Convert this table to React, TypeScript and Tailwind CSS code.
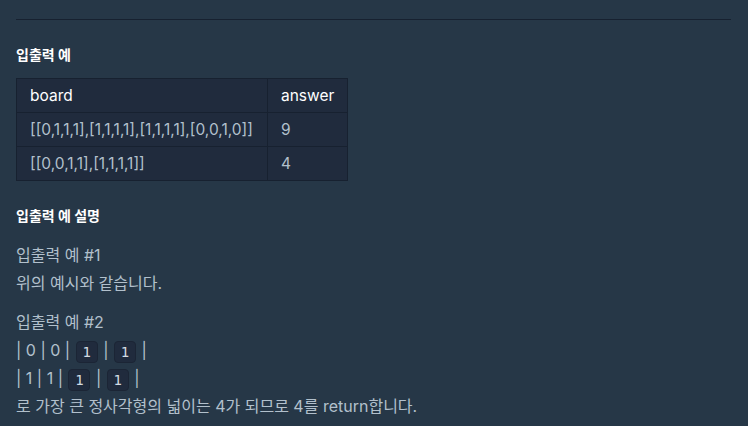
import React from 'react';

const rows = [
  { board: '[[0,1,1,1],[1,1,1,1],[1,1,1,1],[0,0,1,0]]', answer: '9' },
  { board: '[[0,0,1,1],[1,1,1,1]]', answer: '4' },
];

function Code({ children }: { children: React.ReactNode }) {
  return (
    <code className="inline-flex items-center justify-center h-[22px] w-[22px] mx-[1px] align-middle rounded-[4px] bg-[#202b3d] border border-[#1b2535] text-[14px] text-[#d3dbe3] font-['DejaVu_Sans_Mono',monospace]">
      {children}
    </code>
  );
}

export default function App() {
  return (
    <div className="min-h-[426px] w-[748px] bg-[#263747] pl-4 pt-[19px] font-['Inter','Noto_Sans_CJK_KR',sans-serif] text-[#b2c0cc]">
      <div className="w-[715px] border-t border-[#172130]" />

      <h5 className="mt-[25px] text-[14px] font-bold text-white leading-[20px]">입출력 예</h5>

      <table className="mt-[13px] border-collapse bg-[#202b3d] text-[15.5px]">
        <thead>
          <tr className="h-[34px]">
            <th className="w-[251px] border border-[#172130] px-[13px] text-left font-normal text-white">board</th>
            <th className="border border-[#172130] px-[13px] text-left font-normal text-white">answer</th>
          </tr>
        </thead>
        <tbody>
          {rows.map((r) => (
            <tr key={r.board} className="h-[34px]">
              <td className="border border-[#172130] px-[13px]">{r.board}</td>
              <td className="border border-[#172130] px-[13px]">{r.answer}</td>
            </tr>
          ))}
        </tbody>
      </table>

      <h5 className="mt-[25px] text-[14px] font-bold text-white leading-[20px]">입출력 예 설명</h5>

      <div className="mt-[15px] text-[16px] leading-[28px]">
        <p>입출력 예 #1</p>
        <p>위의 예시와 같습니다.</p>
        <p className="mt-[11px]">입출력 예 #2</p>
        <p>
          | 0 | 0 | <Code>1</Code> | <Code>1</Code> |
        </p>
        <p>
          | 1 | 1 | <Code>1</Code> | <Code>1</Code> |
        </p>
        <p>로 가장 큰 정사각형의 넓이는 4가 되므로 4를 return합니다.</p>
      </div>
    </div>
  );
}
